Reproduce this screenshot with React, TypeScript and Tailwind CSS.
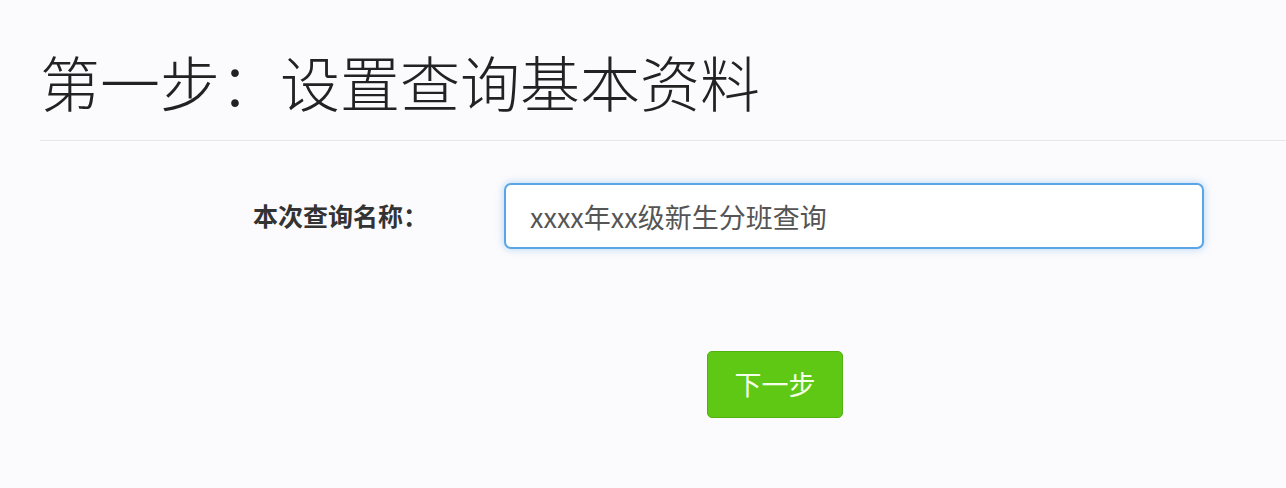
export default function App() {
  return (
    <div
      className="h-[488px] w-[1286px] overflow-hidden bg-[#fbfbfd] text-[#333]"
      style={{ fontFamily: '"Noto Sans CJK SC", "Noto Sans", sans-serif' }}
    >
      <div className="pl-[40px]">
        <h1 className="pt-[38px] pb-[16px] text-[60px] leading-[86px] font-light text-[#222]">
          第一步：设置查询基本资料
        </h1>
        <div className="h-px bg-[#e6e6e6]" />
      </div>

      <div className="mt-[42px] flex items-center">
        <label className="w-[504px] pr-[76px] text-right text-[25px] font-bold text-[#333]">
          本次查询名称：
        </label>
        <input
          defaultValue="xxxx年xx级新生分班查询"
          className="h-[66px] w-[700px] rounded-[7px] border-2 border-[#5aa5e6] bg-white px-[24px] text-[27px] text-[#555] shadow-[0_0_8px_rgba(90,165,230,0.45)] outline-none"
        />
      </div>

      <div className="mt-[102px] flex justify-center pl-[264px]">
        <button className="h-[67px] w-[136px] rounded-[5px] border border-[#52b010] bg-[#5fc815] text-[27px] text-[#f4ffe8]">
          下一步
        </button>
      </div>
    </div>
  );
}
